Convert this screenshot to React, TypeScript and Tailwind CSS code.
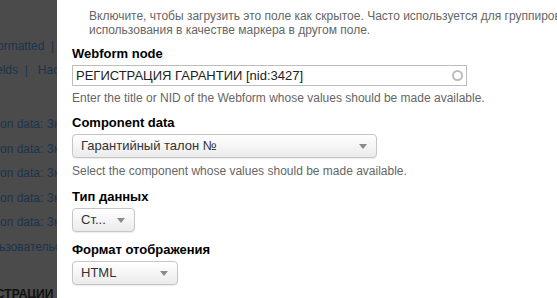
import React from 'react';

function Select({ value, width }: { value: string; width: string }) {
  return (
    <div
      className={`${width} h-[24px] mt-[3px] flex items-center justify-between pl-[8px] pr-[9px] rounded-[4px] border border-[#c6c6c6] bg-gradient-to-b from-white to-[#ebebeb] shadow-[0_1px_1px_rgba(0,0,0,0.08)] text-[13px] text-[#333]`}
    >
      <span className="whitespace-nowrap">{value}</span>
      <span className="w-0 h-0 border-l-[4px] border-r-[4px] border-t-[5px] border-l-transparent border-r-transparent border-t-[#8a8a8a]" />
    </div>
  );
}

const backLines = [
  { text: 'ormatted  |  Ф', y: 'mt-[39px]', x: '-ml-[3px]' },
  { text: 'elds  |   Настройки', y: 'mt-[10px]', x: '-ml-[4px]' },
  { text: 'on data: Значение', y: 'mt-[40px]', x: 'ml-0' },
  { text: 'on data: Значение', y: 'mt-[10.5px]', x: 'ml-0' },
  { text: 'on data: Значение', y: 'mt-[10.5px]', x: 'ml-0' },
  { text: 'on data: Значение', y: 'mt-[10.5px]', x: 'ml-0' },
  { text: 'on data: Значение', y: 'mt-[10.5px]', x: 'ml-0' },
  { text: 'ьзовательские', y: 'mt-[10.5px]', x: '-ml-[1px]' },
];

export default function App() {
  return (
    <div className="flex w-[557px] h-[298px] overflow-hidden font-['Liberation_Sans',Arial,sans-serif]">
      {/* page behind the dialog, dimmed */}
      <div className="w-[57px] shrink-0 bg-[#4b4b4b] overflow-hidden text-[12px] leading-[14px] text-[#1b344d]">
        {backLines.map((l, i) => (
          <div key={i} className={`${l.y} ${l.x} whitespace-pre`}>
            {l.text}
          </div>
        ))}
        <div className="mt-[33px] whitespace-pre font-bold text-[12px] text-[#111] -ml-[4px]">СТРАЦИИ</div>
      </div>

      {/* dialog */}
      <div className="flex-1 bg-white pl-[15px] pt-[9px]">
        <p className="pl-[17px] text-[12px] leading-[14px] text-[#666] whitespace-nowrap">
          Включите, чтобы загрузить это поле как скрытое. Часто используется для группировки
          <br />
          использования в качестве маркера в другом поле.
        </p>

        <div className="mt-[9px] text-[13px] leading-[16px] font-bold text-black">Webform node</div>
        <div className="mt-[3px] w-[395px] h-[21px] border border-[#bdbdbd] flex items-center justify-between pl-[3px] pr-[3px] text-[13px] text-[#222]">
          <span>РЕГИСТРАЦИЯ ГАРАНТИИ [nid:3427]</span>
          <span className="w-[11px] h-[11px] rounded-full border-2 border-[#bcbcbc]" />
        </div>
        <p className="mt-[5px] text-[12px] leading-[14px] text-[#666]">
          Enter the title or NID of the Webform whose values should be made available.
        </p>

        <div className="mt-[10px] text-[13px] leading-[16px] font-bold text-black">Component data</div>
        <Select value="Гарантийный талон №" width="w-[305px]" />
        <p className="mt-[6px] text-[12px] leading-[14px] text-[#666]">
          Select the component whose values should be made available.
        </p>

        <div className="mt-[11px] text-[13px] leading-[16px] font-bold text-black">Тип данных</div>
        <Select value="Ст..." width="w-[63px]" />

        <div className="mt-[10px] text-[13px] leading-[16px] font-bold text-black">Формат отображения</div>
        <Select value="HTML" width="w-[106px]" />
      </div>
    </div>
  );
}
